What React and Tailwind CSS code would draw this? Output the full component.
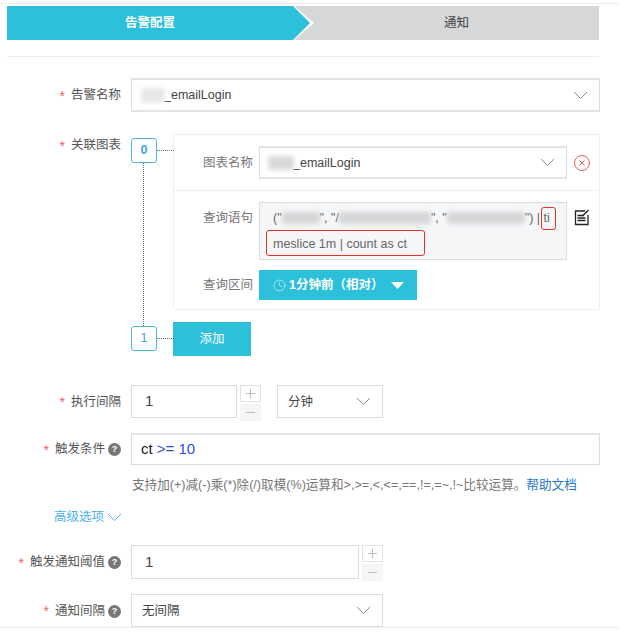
import { Clock, CircleX } from 'lucide-react'

const FONT = 'font-["Liberation_Sans","Noto_Sans_CJK_SC",sans-serif]'

// thin wide chevron used by all the selects
function Chevron({ className = '', color = '#8a8a8a' }) {
  return (
    <svg width="15" height="9" viewBox="0 0 15 9" fill="none" className={className}>
      <path d="M1 1l6.5 6.5L14 1" stroke={color} strokeWidth="1" />
    </svg>
  )
}

function Help() {
  return (
    <span className="w-[13px] h-[13px] ml-[3px] rounded-full bg-[#777] text-white text-[9px] font-bold leading-[13px] text-center shrink-0">?</span>
  )
}

function Label({ text, help, width = 'w-[121px]', className = '' }) {
  return (
    <div className={`${width} shrink-0 flex items-center justify-end pt-[1px] text-[12.5px] text-[#555] ${className}`}>
      <span className="text-[#f0616b] mr-[6px] text-[14px] leading-none">*</span>
      <span>{text}</span>
      {help && <Help />}
    </div>
  )
}

function Blur({ w, h = 12, className = 'bg-[#d4d6d8]' }) {
  return <span className={`inline-block align-middle blur-[2px] rounded-sm ${className}`} style={{ width: w, height: h }} />
}

function Select({ children, className = '' }) {
  return (
    <div className={`flex items-center justify-between bg-white border border-[#dcdcdc] pl-[12px] pr-[11px] text-[12.5px] text-[#444] ${className}`}>
      <div className="flex items-center pt-[1px]">{children}</div>
      <Chevron />
    </div>
  )
}

function Stepper() {
  return (
    <div className="flex flex-col gap-[2px] w-[21px] ml-[3px] text-[#bbb]">
      <div className="h-[17px] border border-[#e2e2e2] flex items-center justify-center">
        <svg width="9" height="9" viewBox="0 0 9 9"><path d="M0 4.5h9M4.5 0v9" stroke="#bbb" /></svg>
      </div>
      <div className="h-[17px] bg-[#f4f5f6] flex items-center justify-center">
        <svg width="9" height="9" viewBox="0 0 9 9"><path d="M0 4.5h9" stroke="#bbb" /></svg>
      </div>
    </div>
  )
}

function EditIcon() {
  return (
    <svg width="16" height="17" viewBox="0 0 16 17" fill="none" stroke="#222" strokeWidth="1.3">
      <path d="M11 2H1.500v13.500h12.500V6" />
      <path d="M3.500 6.500h6M3.500 9h8M3.500 11.500h8" />
      <path d="M8.500 7l6-6" strokeWidth="1.500" />
    </svg>
  )
}

export default function App() {
  return (
    <div className={`w-[630px] h-[641px] overflow-hidden bg-white pt-[3px] ${FONT}`}>
      <div className="w-[619px] h-[625px] overflow-hidden border-y border-[#eeeeee]">
        {/* Steps */}
        <div className="ml-[7px] w-[592px] mt-[2px] h-[34px] flex bg-[#d5d7d9]">
          <div className="w-[307px] h-full bg-white [clip-path:polygon(0_0,287px_0,307px_17px,287px_34px,0_34px)]">
            <div className="w-[303px] h-full pr-[17px] bg-[#2dc0db] text-white text-[12.5px] font-bold flex items-center justify-center [clip-path:polygon(0_0,286px_0,303px_17px,286px_34px,0_34px)]">告警配置</div>
          </div>
          <div className="flex-1 flex items-center justify-center text-[12.5px] text-[#444]">通知</div>
        </div>
        <div className="ml-[7px] w-[592px] mt-[16px] border-t border-[#eeeeee]" />

        {/* 告警名称 */}
        <div className="flex items-center gap-[10px] mt-[21px]">
          <Label text="告警名称" />
          <Select className="w-[469px] h-[34px] border-y-2 border-y-[#e4e4e4]">
            <Blur w={24} h={15} className="bg-[#e8e8e8] mr-[-1px] ml-[-3px]" />
            <span>_emailLogin</span>
          </Select>
        </div>

        {/* 关联图表 */}
        <div className="flex gap-[10px] mt-[22px]">
          <Label text="关联图表" className="h-[22px]" />
          <div className="flex w-[469px]">
            <div className="w-[42px] shrink-0 flex flex-col items-start pt-[4px] pb-[5px]">
              <div className="relative w-[26px] h-[25px] rounded-[3px] border border-[#4db4ee] text-[#3aa8ec] text-[12.5px] font-bold flex items-center justify-center">
                0
                <span className="absolute left-[25px] top-[11px] w-[17px] border-t border-dotted border-[#666]" />
              </div>
              <div className="flex-1 ml-[12px] border-l border-dotted border-[#666]" />
              <div className="relative w-[26px] h-[25px] rounded-[3px] border border-[#4db4ee] text-[#3aa8ec] text-[12.5px] flex items-center justify-center">
                1
                <span className="absolute left-[25px] top-[11px] w-[17px] border-t border-dotted border-[#666]" />
              </div>
            </div>
            <div className="flex-1">
              <div className="w-[427px] h-[176px] border border-[#eeeeee] rounded-[2px]">
                <div className="h-[56px] flex items-center border-b border-[#eeeeee]">
                  <div className="w-[79px] pt-[1px] text-right text-[12.5px] text-[#777] shrink-0">图表名称</div>
                  <Select className="ml-[6px] w-[308px] h-[33px] border-y-2 border-y-[#e4e4e4]">
                    <Blur w={26} h={14} className="bg-[#d9d9d9] ml-[-4px] mr-[-1px]" />
                    <span>_emailLogin</span>
                  </Select>
                  <CircleX size={18} strokeWidth={1.2} color="#f0484e" className="ml-[6px]" />
                </div>
                <div className="flex pt-[11px]">
                  <div className="w-[79px] text-right text-[12.5px] text-[#777] shrink-0 pt-[7px]">查询语句</div>
                  <div className="relative ml-[6px] w-[308px] h-[58px] bg-[#f5f6f8] border border-[#dcdcdc] pl-[13px] pt-[4px] text-[12.5px] leading-[26px] text-[#666] whitespace-nowrap">
                    <div className="flex items-center h-[22px]">
                      <span>("</span>
                      <Blur w={38} />
                      <span>", "/</span>
                      <Blur w={92} />
                      <span>", "</span>
                      <Blur w={78} />
                      <span>") |&nbsp;ti</span>
                    </div>
                    <div className="mt-[3px] leading-[24px]">meslice 1m | count as ct</div>
                    <span className="absolute left-[281px] top-[4px] w-[15px] h-[23px] border border-[#e8302a] rounded-[3px]" />
                    <span className="absolute left-[6px] top-[27px] w-[159px] h-[26px] border border-[#e8302a] rounded-[3px]" />
                  </div>
                  <div className="ml-[7px] pt-[7px]"><EditIcon /></div>
                </div>
                <div className="flex items-center mt-[10px]">
                  <div className="w-[79px] text-right text-[12.5px] text-[#777] shrink-0">查询区间</div>
                  <div className="ml-[6px] w-[158px] h-[30px] bg-[#2dc0db] text-white text-[12.5px] font-bold flex items-center pl-[14px]">
                    <Clock size={13} strokeWidth={1} className="mr-[3px]" />
                    <span>1分钟前（相对）</span>
                    <svg width="13" height="7" viewBox="0 0 13 7" className="ml-[8px]"><path d="M0 0h13L6.500 7z" fill="#fff" /></svg>
                  </div>
                </div>
              </div>
              <div className="mt-[12px] w-[78px] h-[34px] bg-[#2dc0db] text-white text-[12.5px] flex items-center justify-center">添加</div>
            </div>
          </div>
        </div>

        {/* 执行间隔 */}
        <div className="flex items-start gap-[10px] mt-[29px]">
          <Label text="执行间隔" className="h-[33px]" />
          <div className="flex items-start">
            <div className="w-[106px] h-[33px] border border-[#dcdcdc] pl-[13px] flex items-center text-[15px] text-[#444]">1</div>
            <Stepper />
            <Select className="ml-[16px] w-[106px] h-[33px] !pl-[10px]">分钟</Select>
          </div>
        </div>

        {/* 触发条件 */}
        <div className="flex items-center gap-[10px] mt-[12px]">
          <Label text="触发条件" help />
          <div className="w-[469px] h-[32px] border border-[#dcdcdc] border-t-2 border-t-[#e6e6e6] pl-[9px] flex items-center text-[15px] text-[#222]">
            ct&nbsp;<span className="text-[#2a4fe0]">&gt;= 10</span>
          </div>
        </div>
        <div className="ml-[132px] mt-[12px] text-[12.6px] leading-[16px] text-[#777] whitespace-nowrap">
          支持加(+)减(-)乘(*)除(/)取模(%)运算和&gt;,&gt;=,&lt;,&lt;=,==,!=,=~,!~比较运算。<span className="text-[#2478c8]">帮助文档</span>
        </div>
        <div className="ml-[54px] mt-[16px] flex items-center text-[12.5px] leading-[16px] text-[#4cb1ee]">
          高级选项<Chevron className="ml-[3px]" color="#4cb1ee" />
        </div>

        {/* 触发通知阈值 */}
        <div className="flex items-start gap-[10px] mt-[20px]">
          <Label text="触发通知阈值" help className="h-[34px]" />
          <div className="flex items-start">
            <div className="w-[228px] h-[34px] border border-[#dcdcdc] pl-[13px] flex items-center text-[15px] text-[#444]">1</div>
            <Stepper />
          </div>
        </div>

        {/* 通知间隔 */}
        <div className="flex items-center gap-[10px] mt-[13px]">
          <Label text="通知间隔" help />
          <Select className="w-[252px] h-[33px] !pl-[10px]">无间隔</Select>
        </div>
      </div>
    </div>
  )
}
